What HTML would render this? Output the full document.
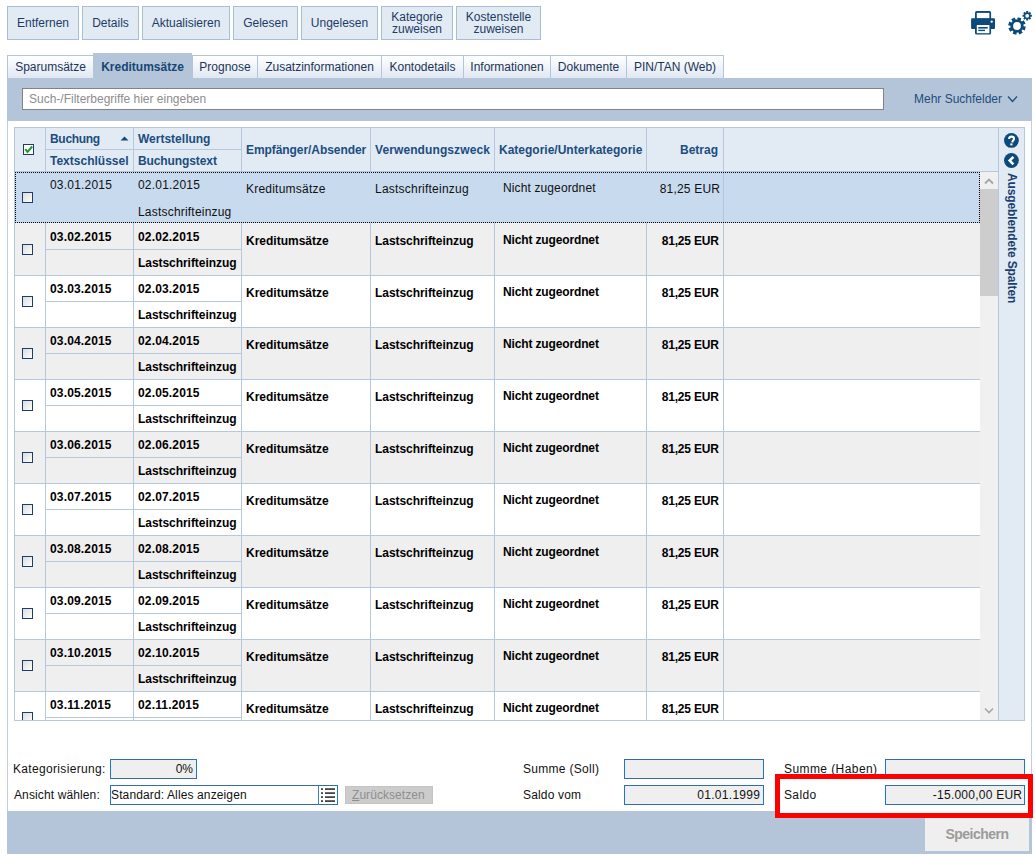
<!DOCTYPE html>
<html><head><meta charset="utf-8"><style>
html,body{margin:0;padding:0;background:#fff;}
body{width:1035px;height:857px;position:relative;overflow:hidden;font-family:"Liberation Sans", sans-serif;font-size:12px;}
.t{position:absolute;white-space:nowrap;line-height:14px;font-family:"Liberation Sans", sans-serif;font-size:12px;}
</style></head><body>
<div style="position:absolute;left:7px;top:6px;width:72px;height:34px;background:#e2eaf4;border:1px solid #a9bdd6;box-sizing:border-box;"></div><div class="t" style="left:7px;top:16px;width:72px;text-align:center;color:#1c3c64;">Entfernen</div><div style="position:absolute;left:82px;top:6px;width:57px;height:34px;background:#e2eaf4;border:1px solid #a9bdd6;box-sizing:border-box;"></div><div class="t" style="left:82px;top:16px;width:57px;text-align:center;color:#1c3c64;">Details</div><div style="position:absolute;left:142px;top:6px;width:88px;height:34px;background:#e2eaf4;border:1px solid #a9bdd6;box-sizing:border-box;"></div><div class="t" style="left:142px;top:16px;width:88px;text-align:center;color:#1c3c64;">Aktualisieren</div><div style="position:absolute;left:233px;top:6px;width:65px;height:34px;background:#e2eaf4;border:1px solid #a9bdd6;box-sizing:border-box;"></div><div class="t" style="left:233px;top:16px;width:65px;text-align:center;color:#1c3c64;">Gelesen</div><div style="position:absolute;left:301px;top:6px;width:77px;height:34px;background:#e2eaf4;border:1px solid #a9bdd6;box-sizing:border-box;"></div><div class="t" style="left:301px;top:16px;width:77px;text-align:center;color:#1c3c64;">Ungelesen</div><div style="position:absolute;left:381px;top:6px;width:72px;height:34px;background:#e2eaf4;border:1px solid #a9bdd6;box-sizing:border-box;"></div><div class="t" style="left:381px;top:10px;width:72px;text-align:center;color:#1c3c64;">Kategorie</div><div class="t" style="left:381px;top:22px;width:72px;text-align:center;color:#1c3c64;">zuweisen</div><div style="position:absolute;left:456px;top:6px;width:85px;height:34px;background:#e2eaf4;border:1px solid #a9bdd6;box-sizing:border-box;"></div><div class="t" style="left:456px;top:10px;width:85px;text-align:center;color:#1c3c64;">Kostenstelle</div><div class="t" style="left:456px;top:22px;width:85px;text-align:center;color:#1c3c64;">zuweisen</div><svg style="position:absolute;left:965px;top:5px" width="35" height="35" viewBox="0 0 35 35">
<rect x="10" y="6.1" width="16.1" height="9" rx="1.6" fill="#0b4a7a"/>
<rect x="11.8" y="7.9" width="12.6" height="5.6" fill="#fff"/>
<rect x="6.1" y="13.3" width="23.9" height="10.8" rx="1" fill="#0b4a7a"/>
<rect x="10" y="19.5" width="16.1" height="10.1" rx="1.6" fill="#0b4a7a"/>
<rect x="11.8" y="20" width="12.6" height="8.2" fill="#fff"/>
<rect x="13.3" y="22.0" width="9.4" height="1.6" fill="#0b4a7a"/>
<rect x="13.3" y="24.7" width="6.7" height="1.4" fill="#0b4a7a"/>
<circle cx="26.7" cy="16.7" r="1.15" fill="#fff"/>
</svg><svg style="position:absolute;left:1000px;top:5px" width="35" height="35" viewBox="0 0 35 35">
<path d="M17.22,14.40 L17.75,12.13 L21.39,13.26 L20.55,15.43 L21.82,16.49 L23.80,15.26 L25.58,18.63 L23.44,19.57 L23.60,21.22 L25.87,21.75 L24.74,25.39 L22.57,24.55 L21.51,25.82 L22.74,27.80 L19.37,29.58 L18.43,27.44 L16.78,27.60 L16.25,29.87 L12.61,28.74 L13.45,26.57 L12.18,25.51 L10.20,26.74 L8.42,23.37 L10.56,22.43 L10.40,20.78 L8.13,20.25 L9.26,16.61 L11.43,17.45 L12.49,16.18 L11.26,14.20 L14.63,12.42 L15.57,14.56 Z M20.90,21.00 A3.9,3.9 0 1,0 13.10,21.00 A3.9,3.9 0 1,0 20.90,21.00 Z" fill="#0b4a7a" fill-rule="evenodd"/>
<path d="M26.21,7.55 L26.17,6.11 L28.23,6.11 L28.19,7.55 L28.80,7.80 L29.79,6.76 L31.24,8.21 L30.20,9.20 L30.45,9.81 L31.89,9.77 L31.89,11.83 L30.45,11.79 L30.20,12.40 L31.24,13.39 L29.79,14.84 L28.80,13.80 L28.19,14.05 L28.23,15.49 L26.17,15.49 L26.21,14.05 L25.60,13.80 L24.61,14.84 L23.16,13.39 L24.20,12.40 L23.95,11.79 L22.51,11.83 L22.51,9.77 L23.95,9.81 L24.20,9.20 L23.16,8.21 L24.61,6.76 L25.60,7.80 Z M29.10,10.80 A1.9,1.9 0 1,0 25.30,10.80 A1.9,1.9 0 1,0 29.10,10.80 Z" fill="#0b4a7a" fill-rule="evenodd"/>
</svg><div style="position:absolute;left:7px;top:55px;width:87px;height:24px;background:linear-gradient(#ffffff,#dfe7f2);border:1px solid #b3c4da;border-bottom:none;box-sizing:border-box;"></div><div class="t" style="left:7px;top:60px;width:87px;text-align:center;color:#1c3556;">Sparumsätze</div><div style="position:absolute;left:93px;top:53px;width:99px;height:26px;background:#b4c5da;"></div><div class="t" style="left:93px;top:60px;width:99px;text-align:center;color:#164776;font-weight:bold;">Kreditumsätze</div><div style="position:absolute;left:192px;top:55px;width:66px;height:24px;background:linear-gradient(#ffffff,#dfe7f2);border:1px solid #b3c4da;border-bottom:none;box-sizing:border-box;"></div><div class="t" style="left:192px;top:60px;width:66px;text-align:center;color:#1c3556;">Prognose</div><div style="position:absolute;left:257px;top:55px;width:125px;height:24px;background:linear-gradient(#ffffff,#dfe7f2);border:1px solid #b3c4da;border-bottom:none;box-sizing:border-box;"></div><div class="t" style="left:257px;top:60px;width:125px;text-align:center;color:#1c3556;">Zusatzinformationen</div><div style="position:absolute;left:381px;top:55px;width:83px;height:24px;background:linear-gradient(#ffffff,#dfe7f2);border:1px solid #b3c4da;border-bottom:none;box-sizing:border-box;"></div><div class="t" style="left:381px;top:60px;width:83px;text-align:center;color:#1c3556;">Kontodetails</div><div style="position:absolute;left:463px;top:55px;width:88px;height:24px;background:linear-gradient(#ffffff,#dfe7f2);border:1px solid #b3c4da;border-bottom:none;box-sizing:border-box;"></div><div class="t" style="left:463px;top:60px;width:88px;text-align:center;color:#1c3556;">Informationen</div><div style="position:absolute;left:550px;top:55px;width:77px;height:24px;background:linear-gradient(#ffffff,#dfe7f2);border:1px solid #b3c4da;border-bottom:none;box-sizing:border-box;"></div><div class="t" style="left:550px;top:60px;width:77px;text-align:center;color:#1c3556;">Dokumente</div><div style="position:absolute;left:626px;top:55px;width:98px;height:24px;background:linear-gradient(#ffffff,#dfe7f2);border:1px solid #b3c4da;border-bottom:none;box-sizing:border-box;"></div><div class="t" style="left:626px;top:60px;width:98px;text-align:center;color:#1c3556;">PIN/TAN (Web)</div><div style="position:absolute;left:7px;top:78px;width:1025px;height:43px;background:#b4c5da;"></div><div style="position:absolute;left:22px;top:88px;width:862px;height:22px;background:#fff;border:1px solid #838383;box-sizing:border-box;"></div><div class="t" style="left:29px;top:92px;text-align:left;color:#8d8d8d;">Such-/Filterbegriffe hier eingeben</div><div class="t" style="left:914px;top:92px;text-align:left;color:#1e4d7b;">Mehr Suchfelder</div><svg style="position:absolute;left:1007px;top:95px" width="12" height="9" viewBox="0 0 12 9"><path d="M1,1.5 L5.5,6.5 L10,1.5" fill="none" stroke="#1e4d7b" stroke-width="1.2"/></svg><div style="position:absolute;left:7px;top:121px;width:1px;height:690px;background:#c0cfe2;"></div><div style="position:absolute;left:1031px;top:121px;width:1px;height:690px;background:#c0cfe2;"></div><div style="position:absolute;left:14px;top:127px;width:985px;height:45px;background:#e2eaf4;"></div><div style="position:absolute;left:998px;top:127px;width:27px;height:594px;background:#e2eaf4;"></div><div style="position:absolute;left:14px;top:127px;width:1011px;height:1px;background:#b7c7dd;"></div><div style="position:absolute;left:14px;top:127px;width:1px;height:594px;background:#b7c7dd;"></div><div style="position:absolute;left:998px;top:127px;width:1px;height:594px;background:#b7c7dd;"></div><div style="position:absolute;left:1024px;top:127px;width:1px;height:594px;background:#b7c7dd;"></div><div style="position:absolute;left:14px;top:720px;width:1011px;height:1px;background:#b7c7dd;"></div><div style="position:absolute;left:14px;top:171px;width:985px;height:1px;background:#b7c7dd;"></div><div style="position:absolute;left:45px;top:127px;width:1px;height:45px;background:#b7c7dd;"></div><div style="position:absolute;left:133px;top:127px;width:1px;height:45px;background:#b7c7dd;"></div><div style="position:absolute;left:241px;top:127px;width:1px;height:45px;background:#b7c7dd;"></div><div style="position:absolute;left:370px;top:127px;width:1px;height:45px;background:#b7c7dd;"></div><div style="position:absolute;left:494px;top:127px;width:1px;height:45px;background:#b7c7dd;"></div><div style="position:absolute;left:646px;top:127px;width:1px;height:45px;background:#b7c7dd;"></div><div style="position:absolute;left:723px;top:127px;width:1px;height:45px;background:#b7c7dd;"></div><div style="position:absolute;left:45px;top:149px;width:197px;height:1px;background:#b7c7dd;"></div><svg style="position:absolute;left:22px;top:143px" width="13" height="13" viewBox="0 0 13 13"><rect x="1.5" y="1.5" width="10" height="10" fill="#fff" stroke="#1d3f66" stroke-width="1"/><path d="M3.2,6.2 L5.5,8.9 L10.2,3.5" fill="none" stroke="#229a22" stroke-width="2"/></svg><div class="t" style="left:50px;top:132px;text-align:left;letter-spacing:-0.3px;color:#1b4d80;font-weight:bold;">Buchung</div><svg style="position:absolute;left:120px;top:136px" width="9" height="5" viewBox="0 0 9 5"><path d="M0.5,4.5 L4.5,0.5 L8.5,4.5 Z" fill="#174a78"/></svg><div class="t" style="left:50px;top:154px;text-align:left;color:#1b4d80;font-weight:bold;">Textschlüssel</div><div class="t" style="left:138px;top:132px;text-align:left;color:#1b4d80;font-weight:bold;">Wertstellung</div><div class="t" style="left:138px;top:154px;text-align:left;letter-spacing:-0.1px;color:#1b4d80;font-weight:bold;">Buchungstext</div><div class="t" style="left:246px;top:143px;text-align:left;letter-spacing:-0.07px;color:#1b4d80;font-weight:bold;">Empfänger/Absender</div><div class="t" style="left:375px;top:143px;text-align:left;letter-spacing:0.1px;color:#1b4d80;font-weight:bold;">Verwendungszweck</div><div class="t" style="left:499px;top:143px;text-align:left;color:#1b4d80;font-weight:bold;">Kategorie/Unterkategorie</div><div class="t" style="left:646px;top:143px;width:72px;text-align:right;color:#1b4d80;font-weight:bold;">Betrag</div><div style="position:absolute;left:15px;top:172px;width:965px;height:548px;overflow:hidden"><div style="position:absolute;left:0px;top:51px;width:965px;height:52px;background:#efefef;"></div><div style="position:absolute;left:0px;top:103px;width:965px;height:52px;background:#fff;"></div><div style="position:absolute;left:0px;top:155px;width:965px;height:52px;background:#efefef;"></div><div style="position:absolute;left:0px;top:207px;width:965px;height:52px;background:#fff;"></div><div style="position:absolute;left:0px;top:259px;width:965px;height:52px;background:#efefef;"></div><div style="position:absolute;left:0px;top:311px;width:965px;height:52px;background:#fff;"></div><div style="position:absolute;left:0px;top:363px;width:965px;height:52px;background:#efefef;"></div><div style="position:absolute;left:0px;top:415px;width:965px;height:52px;background:#fff;"></div><div style="position:absolute;left:0px;top:467px;width:965px;height:52px;background:#efefef;"></div><div style="position:absolute;left:0px;top:519px;width:965px;height:52px;background:#fff;"></div><div style="position:absolute;left:-1px;top:0px;width:966px;height:51px;background:#c8daee;"></div><div style="position:absolute;left:0px;top:0px;width:965px;height:1px;border-top:1px dotted #000;box-sizing:border-box;"></div><div style="position:absolute;left:0px;top:50px;width:965px;height:1px;border-top:1px dotted #000;box-sizing:border-box;"></div><div style="position:absolute;left:0px;top:0px;width:1px;height:51px;border-left:1px dotted #000;box-sizing:border-box;"></div><div style="position:absolute;left:964px;top:0px;width:1px;height:51px;border-left:1px dotted #000;box-sizing:border-box;"></div><div style="position:absolute;left:7px;top:20px;width:11px;height:11px;box-sizing:border-box;border:1px solid #1d3f66;background:linear-gradient(135deg,#dcdcdc,#fdfdfd)"></div><div style="position:absolute;left:708px;top:1px;width:1px;height:49px;background:#b3c5dc;"></div><div class="t" style="left:35px;top:6px;text-align:left;letter-spacing:0.2px;color:#111;">03.01.2015</div><div class="t" style="left:123px;top:6px;text-align:left;letter-spacing:0.2px;color:#111;">02.01.2015</div><div class="t" style="left:123px;top:33px;text-align:left;letter-spacing:0.2px;color:#111;">Lastschrifteinzug</div><div class="t" style="left:231px;top:10px;text-align:left;letter-spacing:0.22px;color:#111;">Kreditumsätze</div><div class="t" style="left:360px;top:10px;text-align:left;letter-spacing:0.22px;color:#111;">Lastschrifteinzug</div><div class="t" style="left:488px;top:9px;text-align:left;letter-spacing:0.12px;color:#111;">Nicht zugeordnet</div><div class="t" style="left:631px;top:10px;width:74.2px;text-align:right;letter-spacing:0.2px;color:#111;">81,25 EUR</div><div style="position:absolute;left:0px;top:103px;width:965px;height:1px;background:#b7c7dd;"></div><div style="position:absolute;left:30px;top:51px;width:1px;height:53px;background:#b7c7dd;"></div><div style="position:absolute;left:118px;top:51px;width:1px;height:53px;background:#b7c7dd;"></div><div style="position:absolute;left:226px;top:51px;width:1px;height:53px;background:#b7c7dd;"></div><div style="position:absolute;left:355px;top:51px;width:1px;height:53px;background:#b7c7dd;"></div><div style="position:absolute;left:479px;top:51px;width:1px;height:53px;background:#b7c7dd;"></div><div style="position:absolute;left:631px;top:51px;width:1px;height:53px;background:#b7c7dd;"></div><div style="position:absolute;left:708px;top:51px;width:1px;height:53px;background:#b7c7dd;"></div><div style="position:absolute;left:31px;top:77px;width:195px;height:1px;background:#b7c7dd;"></div><div style="position:absolute;left:7px;top:72px;width:11px;height:11px;box-sizing:border-box;border:1px solid #1d3f66;background:linear-gradient(135deg,#dcdcdc,#fdfdfd)"></div><div class="t" style="left:35px;top:58px;text-align:left;letter-spacing:0.16px;color:#000;font-weight:bold;">03.02.2015</div><div class="t" style="left:123px;top:58px;text-align:left;letter-spacing:0.16px;color:#000;font-weight:bold;">02.02.2015</div><div class="t" style="left:123px;top:84px;text-align:left;letter-spacing:-0.05px;color:#000;font-weight:bold;">Lastschrifteinzug</div><div class="t" style="left:231px;top:62px;text-align:left;color:#000;font-weight:bold;">Kreditumsätze</div><div class="t" style="left:360px;top:62px;text-align:left;letter-spacing:-0.05px;color:#000;font-weight:bold;">Lastschrifteinzug</div><div class="t" style="left:488px;top:61px;text-align:left;letter-spacing:-0.14px;color:#000;font-weight:bold;">Nicht zugeordnet</div><div class="t" style="left:631px;top:62px;width:72.82px;text-align:right;letter-spacing:-0.18px;color:#000;font-weight:bold;">81,25 EUR</div><div style="position:absolute;left:0px;top:155px;width:965px;height:1px;background:#b7c7dd;"></div><div style="position:absolute;left:30px;top:103px;width:1px;height:53px;background:#b7c7dd;"></div><div style="position:absolute;left:118px;top:103px;width:1px;height:53px;background:#b7c7dd;"></div><div style="position:absolute;left:226px;top:103px;width:1px;height:53px;background:#b7c7dd;"></div><div style="position:absolute;left:355px;top:103px;width:1px;height:53px;background:#b7c7dd;"></div><div style="position:absolute;left:479px;top:103px;width:1px;height:53px;background:#b7c7dd;"></div><div style="position:absolute;left:631px;top:103px;width:1px;height:53px;background:#b7c7dd;"></div><div style="position:absolute;left:708px;top:103px;width:1px;height:53px;background:#b7c7dd;"></div><div style="position:absolute;left:31px;top:129px;width:195px;height:1px;background:#b7c7dd;"></div><div style="position:absolute;left:7px;top:124px;width:11px;height:11px;box-sizing:border-box;border:1px solid #1d3f66;background:linear-gradient(135deg,#dcdcdc,#fdfdfd)"></div><div class="t" style="left:35px;top:110px;text-align:left;letter-spacing:0.16px;color:#000;font-weight:bold;">03.03.2015</div><div class="t" style="left:123px;top:110px;text-align:left;letter-spacing:0.16px;color:#000;font-weight:bold;">02.03.2015</div><div class="t" style="left:123px;top:136px;text-align:left;letter-spacing:-0.05px;color:#000;font-weight:bold;">Lastschrifteinzug</div><div class="t" style="left:231px;top:114px;text-align:left;color:#000;font-weight:bold;">Kreditumsätze</div><div class="t" style="left:360px;top:114px;text-align:left;letter-spacing:-0.05px;color:#000;font-weight:bold;">Lastschrifteinzug</div><div class="t" style="left:488px;top:113px;text-align:left;letter-spacing:-0.14px;color:#000;font-weight:bold;">Nicht zugeordnet</div><div class="t" style="left:631px;top:114px;width:72.82px;text-align:right;letter-spacing:-0.18px;color:#000;font-weight:bold;">81,25 EUR</div><div style="position:absolute;left:0px;top:207px;width:965px;height:1px;background:#b7c7dd;"></div><div style="position:absolute;left:30px;top:155px;width:1px;height:53px;background:#b7c7dd;"></div><div style="position:absolute;left:118px;top:155px;width:1px;height:53px;background:#b7c7dd;"></div><div style="position:absolute;left:226px;top:155px;width:1px;height:53px;background:#b7c7dd;"></div><div style="position:absolute;left:355px;top:155px;width:1px;height:53px;background:#b7c7dd;"></div><div style="position:absolute;left:479px;top:155px;width:1px;height:53px;background:#b7c7dd;"></div><div style="position:absolute;left:631px;top:155px;width:1px;height:53px;background:#b7c7dd;"></div><div style="position:absolute;left:708px;top:155px;width:1px;height:53px;background:#b7c7dd;"></div><div style="position:absolute;left:31px;top:181px;width:195px;height:1px;background:#b7c7dd;"></div><div style="position:absolute;left:7px;top:176px;width:11px;height:11px;box-sizing:border-box;border:1px solid #1d3f66;background:linear-gradient(135deg,#dcdcdc,#fdfdfd)"></div><div class="t" style="left:35px;top:162px;text-align:left;letter-spacing:0.16px;color:#000;font-weight:bold;">03.04.2015</div><div class="t" style="left:123px;top:162px;text-align:left;letter-spacing:0.16px;color:#000;font-weight:bold;">02.04.2015</div><div class="t" style="left:123px;top:188px;text-align:left;letter-spacing:-0.05px;color:#000;font-weight:bold;">Lastschrifteinzug</div><div class="t" style="left:231px;top:166px;text-align:left;color:#000;font-weight:bold;">Kreditumsätze</div><div class="t" style="left:360px;top:166px;text-align:left;letter-spacing:-0.05px;color:#000;font-weight:bold;">Lastschrifteinzug</div><div class="t" style="left:488px;top:165px;text-align:left;letter-spacing:-0.14px;color:#000;font-weight:bold;">Nicht zugeordnet</div><div class="t" style="left:631px;top:166px;width:72.82px;text-align:right;letter-spacing:-0.18px;color:#000;font-weight:bold;">81,25 EUR</div><div style="position:absolute;left:0px;top:259px;width:965px;height:1px;background:#b7c7dd;"></div><div style="position:absolute;left:30px;top:207px;width:1px;height:53px;background:#b7c7dd;"></div><div style="position:absolute;left:118px;top:207px;width:1px;height:53px;background:#b7c7dd;"></div><div style="position:absolute;left:226px;top:207px;width:1px;height:53px;background:#b7c7dd;"></div><div style="position:absolute;left:355px;top:207px;width:1px;height:53px;background:#b7c7dd;"></div><div style="position:absolute;left:479px;top:207px;width:1px;height:53px;background:#b7c7dd;"></div><div style="position:absolute;left:631px;top:207px;width:1px;height:53px;background:#b7c7dd;"></div><div style="position:absolute;left:708px;top:207px;width:1px;height:53px;background:#b7c7dd;"></div><div style="position:absolute;left:31px;top:233px;width:195px;height:1px;background:#b7c7dd;"></div><div style="position:absolute;left:7px;top:228px;width:11px;height:11px;box-sizing:border-box;border:1px solid #1d3f66;background:linear-gradient(135deg,#dcdcdc,#fdfdfd)"></div><div class="t" style="left:35px;top:214px;text-align:left;letter-spacing:0.16px;color:#000;font-weight:bold;">03.05.2015</div><div class="t" style="left:123px;top:214px;text-align:left;letter-spacing:0.16px;color:#000;font-weight:bold;">02.05.2015</div><div class="t" style="left:123px;top:240px;text-align:left;letter-spacing:-0.05px;color:#000;font-weight:bold;">Lastschrifteinzug</div><div class="t" style="left:231px;top:218px;text-align:left;color:#000;font-weight:bold;">Kreditumsätze</div><div class="t" style="left:360px;top:218px;text-align:left;letter-spacing:-0.05px;color:#000;font-weight:bold;">Lastschrifteinzug</div><div class="t" style="left:488px;top:217px;text-align:left;letter-spacing:-0.14px;color:#000;font-weight:bold;">Nicht zugeordnet</div><div class="t" style="left:631px;top:218px;width:72.82px;text-align:right;letter-spacing:-0.18px;color:#000;font-weight:bold;">81,25 EUR</div><div style="position:absolute;left:0px;top:311px;width:965px;height:1px;background:#b7c7dd;"></div><div style="position:absolute;left:30px;top:259px;width:1px;height:53px;background:#b7c7dd;"></div><div style="position:absolute;left:118px;top:259px;width:1px;height:53px;background:#b7c7dd;"></div><div style="position:absolute;left:226px;top:259px;width:1px;height:53px;background:#b7c7dd;"></div><div style="position:absolute;left:355px;top:259px;width:1px;height:53px;background:#b7c7dd;"></div><div style="position:absolute;left:479px;top:259px;width:1px;height:53px;background:#b7c7dd;"></div><div style="position:absolute;left:631px;top:259px;width:1px;height:53px;background:#b7c7dd;"></div><div style="position:absolute;left:708px;top:259px;width:1px;height:53px;background:#b7c7dd;"></div><div style="position:absolute;left:31px;top:285px;width:195px;height:1px;background:#b7c7dd;"></div><div style="position:absolute;left:7px;top:280px;width:11px;height:11px;box-sizing:border-box;border:1px solid #1d3f66;background:linear-gradient(135deg,#dcdcdc,#fdfdfd)"></div><div class="t" style="left:35px;top:266px;text-align:left;letter-spacing:0.16px;color:#000;font-weight:bold;">03.06.2015</div><div class="t" style="left:123px;top:266px;text-align:left;letter-spacing:0.16px;color:#000;font-weight:bold;">02.06.2015</div><div class="t" style="left:123px;top:292px;text-align:left;letter-spacing:-0.05px;color:#000;font-weight:bold;">Lastschrifteinzug</div><div class="t" style="left:231px;top:270px;text-align:left;color:#000;font-weight:bold;">Kreditumsätze</div><div class="t" style="left:360px;top:270px;text-align:left;letter-spacing:-0.05px;color:#000;font-weight:bold;">Lastschrifteinzug</div><div class="t" style="left:488px;top:269px;text-align:left;letter-spacing:-0.14px;color:#000;font-weight:bold;">Nicht zugeordnet</div><div class="t" style="left:631px;top:270px;width:72.82px;text-align:right;letter-spacing:-0.18px;color:#000;font-weight:bold;">81,25 EUR</div><div style="position:absolute;left:0px;top:363px;width:965px;height:1px;background:#b7c7dd;"></div><div style="position:absolute;left:30px;top:311px;width:1px;height:53px;background:#b7c7dd;"></div><div style="position:absolute;left:118px;top:311px;width:1px;height:53px;background:#b7c7dd;"></div><div style="position:absolute;left:226px;top:311px;width:1px;height:53px;background:#b7c7dd;"></div><div style="position:absolute;left:355px;top:311px;width:1px;height:53px;background:#b7c7dd;"></div><div style="position:absolute;left:479px;top:311px;width:1px;height:53px;background:#b7c7dd;"></div><div style="position:absolute;left:631px;top:311px;width:1px;height:53px;background:#b7c7dd;"></div><div style="position:absolute;left:708px;top:311px;width:1px;height:53px;background:#b7c7dd;"></div><div style="position:absolute;left:31px;top:337px;width:195px;height:1px;background:#b7c7dd;"></div><div style="position:absolute;left:7px;top:332px;width:11px;height:11px;box-sizing:border-box;border:1px solid #1d3f66;background:linear-gradient(135deg,#dcdcdc,#fdfdfd)"></div><div class="t" style="left:35px;top:318px;text-align:left;letter-spacing:0.16px;color:#000;font-weight:bold;">03.07.2015</div><div class="t" style="left:123px;top:318px;text-align:left;letter-spacing:0.16px;color:#000;font-weight:bold;">02.07.2015</div><div class="t" style="left:123px;top:344px;text-align:left;letter-spacing:-0.05px;color:#000;font-weight:bold;">Lastschrifteinzug</div><div class="t" style="left:231px;top:322px;text-align:left;color:#000;font-weight:bold;">Kreditumsätze</div><div class="t" style="left:360px;top:322px;text-align:left;letter-spacing:-0.05px;color:#000;font-weight:bold;">Lastschrifteinzug</div><div class="t" style="left:488px;top:321px;text-align:left;letter-spacing:-0.14px;color:#000;font-weight:bold;">Nicht zugeordnet</div><div class="t" style="left:631px;top:322px;width:72.82px;text-align:right;letter-spacing:-0.18px;color:#000;font-weight:bold;">81,25 EUR</div><div style="position:absolute;left:0px;top:415px;width:965px;height:1px;background:#b7c7dd;"></div><div style="position:absolute;left:30px;top:363px;width:1px;height:53px;background:#b7c7dd;"></div><div style="position:absolute;left:118px;top:363px;width:1px;height:53px;background:#b7c7dd;"></div><div style="position:absolute;left:226px;top:363px;width:1px;height:53px;background:#b7c7dd;"></div><div style="position:absolute;left:355px;top:363px;width:1px;height:53px;background:#b7c7dd;"></div><div style="position:absolute;left:479px;top:363px;width:1px;height:53px;background:#b7c7dd;"></div><div style="position:absolute;left:631px;top:363px;width:1px;height:53px;background:#b7c7dd;"></div><div style="position:absolute;left:708px;top:363px;width:1px;height:53px;background:#b7c7dd;"></div><div style="position:absolute;left:31px;top:389px;width:195px;height:1px;background:#b7c7dd;"></div><div style="position:absolute;left:7px;top:384px;width:11px;height:11px;box-sizing:border-box;border:1px solid #1d3f66;background:linear-gradient(135deg,#dcdcdc,#fdfdfd)"></div><div class="t" style="left:35px;top:370px;text-align:left;letter-spacing:0.16px;color:#000;font-weight:bold;">03.08.2015</div><div class="t" style="left:123px;top:370px;text-align:left;letter-spacing:0.16px;color:#000;font-weight:bold;">02.08.2015</div><div class="t" style="left:123px;top:396px;text-align:left;letter-spacing:-0.05px;color:#000;font-weight:bold;">Lastschrifteinzug</div><div class="t" style="left:231px;top:374px;text-align:left;color:#000;font-weight:bold;">Kreditumsätze</div><div class="t" style="left:360px;top:374px;text-align:left;letter-spacing:-0.05px;color:#000;font-weight:bold;">Lastschrifteinzug</div><div class="t" style="left:488px;top:373px;text-align:left;letter-spacing:-0.14px;color:#000;font-weight:bold;">Nicht zugeordnet</div><div class="t" style="left:631px;top:374px;width:72.82px;text-align:right;letter-spacing:-0.18px;color:#000;font-weight:bold;">81,25 EUR</div><div style="position:absolute;left:0px;top:467px;width:965px;height:1px;background:#b7c7dd;"></div><div style="position:absolute;left:30px;top:415px;width:1px;height:53px;background:#b7c7dd;"></div><div style="position:absolute;left:118px;top:415px;width:1px;height:53px;background:#b7c7dd;"></div><div style="position:absolute;left:226px;top:415px;width:1px;height:53px;background:#b7c7dd;"></div><div style="position:absolute;left:355px;top:415px;width:1px;height:53px;background:#b7c7dd;"></div><div style="position:absolute;left:479px;top:415px;width:1px;height:53px;background:#b7c7dd;"></div><div style="position:absolute;left:631px;top:415px;width:1px;height:53px;background:#b7c7dd;"></div><div style="position:absolute;left:708px;top:415px;width:1px;height:53px;background:#b7c7dd;"></div><div style="position:absolute;left:31px;top:441px;width:195px;height:1px;background:#b7c7dd;"></div><div style="position:absolute;left:7px;top:436px;width:11px;height:11px;box-sizing:border-box;border:1px solid #1d3f66;background:linear-gradient(135deg,#dcdcdc,#fdfdfd)"></div><div class="t" style="left:35px;top:422px;text-align:left;letter-spacing:0.16px;color:#000;font-weight:bold;">03.09.2015</div><div class="t" style="left:123px;top:422px;text-align:left;letter-spacing:0.16px;color:#000;font-weight:bold;">02.09.2015</div><div class="t" style="left:123px;top:448px;text-align:left;letter-spacing:-0.05px;color:#000;font-weight:bold;">Lastschrifteinzug</div><div class="t" style="left:231px;top:426px;text-align:left;color:#000;font-weight:bold;">Kreditumsätze</div><div class="t" style="left:360px;top:426px;text-align:left;letter-spacing:-0.05px;color:#000;font-weight:bold;">Lastschrifteinzug</div><div class="t" style="left:488px;top:425px;text-align:left;letter-spacing:-0.14px;color:#000;font-weight:bold;">Nicht zugeordnet</div><div class="t" style="left:631px;top:426px;width:72.82px;text-align:right;letter-spacing:-0.18px;color:#000;font-weight:bold;">81,25 EUR</div><div style="position:absolute;left:0px;top:519px;width:965px;height:1px;background:#b7c7dd;"></div><div style="position:absolute;left:30px;top:467px;width:1px;height:53px;background:#b7c7dd;"></div><div style="position:absolute;left:118px;top:467px;width:1px;height:53px;background:#b7c7dd;"></div><div style="position:absolute;left:226px;top:467px;width:1px;height:53px;background:#b7c7dd;"></div><div style="position:absolute;left:355px;top:467px;width:1px;height:53px;background:#b7c7dd;"></div><div style="position:absolute;left:479px;top:467px;width:1px;height:53px;background:#b7c7dd;"></div><div style="position:absolute;left:631px;top:467px;width:1px;height:53px;background:#b7c7dd;"></div><div style="position:absolute;left:708px;top:467px;width:1px;height:53px;background:#b7c7dd;"></div><div style="position:absolute;left:31px;top:493px;width:195px;height:1px;background:#b7c7dd;"></div><div style="position:absolute;left:7px;top:488px;width:11px;height:11px;box-sizing:border-box;border:1px solid #1d3f66;background:linear-gradient(135deg,#dcdcdc,#fdfdfd)"></div><div class="t" style="left:35px;top:474px;text-align:left;letter-spacing:0.16px;color:#000;font-weight:bold;">03.10.2015</div><div class="t" style="left:123px;top:474px;text-align:left;letter-spacing:0.16px;color:#000;font-weight:bold;">02.10.2015</div><div class="t" style="left:123px;top:500px;text-align:left;letter-spacing:-0.05px;color:#000;font-weight:bold;">Lastschrifteinzug</div><div class="t" style="left:231px;top:478px;text-align:left;color:#000;font-weight:bold;">Kreditumsätze</div><div class="t" style="left:360px;top:478px;text-align:left;letter-spacing:-0.05px;color:#000;font-weight:bold;">Lastschrifteinzug</div><div class="t" style="left:488px;top:477px;text-align:left;letter-spacing:-0.14px;color:#000;font-weight:bold;">Nicht zugeordnet</div><div class="t" style="left:631px;top:478px;width:72.82px;text-align:right;letter-spacing:-0.18px;color:#000;font-weight:bold;">81,25 EUR</div><div style="position:absolute;left:0px;top:571px;width:965px;height:1px;background:#b7c7dd;"></div><div style="position:absolute;left:30px;top:519px;width:1px;height:53px;background:#b7c7dd;"></div><div style="position:absolute;left:118px;top:519px;width:1px;height:53px;background:#b7c7dd;"></div><div style="position:absolute;left:226px;top:519px;width:1px;height:53px;background:#b7c7dd;"></div><div style="position:absolute;left:355px;top:519px;width:1px;height:53px;background:#b7c7dd;"></div><div style="position:absolute;left:479px;top:519px;width:1px;height:53px;background:#b7c7dd;"></div><div style="position:absolute;left:631px;top:519px;width:1px;height:53px;background:#b7c7dd;"></div><div style="position:absolute;left:708px;top:519px;width:1px;height:53px;background:#b7c7dd;"></div><div style="position:absolute;left:31px;top:545px;width:195px;height:1px;background:#b7c7dd;"></div><div style="position:absolute;left:7px;top:540px;width:11px;height:11px;box-sizing:border-box;border:1px solid #1d3f66;background:linear-gradient(135deg,#dcdcdc,#fdfdfd)"></div><div class="t" style="left:35px;top:526px;text-align:left;letter-spacing:0.16px;color:#000;font-weight:bold;">03.11.2015</div><div class="t" style="left:123px;top:526px;text-align:left;letter-spacing:0.16px;color:#000;font-weight:bold;">02.11.2015</div><div class="t" style="left:123px;top:552px;text-align:left;letter-spacing:-0.05px;color:#000;font-weight:bold;">Lastschrifteinzug</div><div class="t" style="left:231px;top:530px;text-align:left;color:#000;font-weight:bold;">Kreditumsätze</div><div class="t" style="left:360px;top:530px;text-align:left;letter-spacing:-0.05px;color:#000;font-weight:bold;">Lastschrifteinzug</div><div class="t" style="left:488px;top:529px;text-align:left;letter-spacing:-0.14px;color:#000;font-weight:bold;">Nicht zugeordnet</div><div class="t" style="left:631px;top:530px;width:72.82px;text-align:right;letter-spacing:-0.18px;color:#000;font-weight:bold;">81,25 EUR</div></div><div style="position:absolute;left:14px;top:720px;width:985px;height:1px;background:#b7c7dd;"></div><div style="position:absolute;left:980px;top:172px;width:18px;height:548px;background:#f0f0f0;"></div><div style="position:absolute;left:980px;top:189px;width:18px;height:107px;background:#cdcdcd;"></div><svg style="position:absolute;left:983px;top:176px" width="12" height="10" viewBox="0 0 12 10"><path d="M2,7.5 L6,3.5 L10,7.5" fill="none" stroke="#a6a6a6" stroke-width="1.8"/></svg><svg style="position:absolute;left:983px;top:706px" width="12" height="10" viewBox="0 0 12 10"><path d="M2,2.5 L6,6.5 L10,2.5" fill="none" stroke="#a6a6a6" stroke-width="1.6"/></svg><svg style="position:absolute;left:1003px;top:132px" width="17" height="36" viewBox="0 0 17 36">
<circle cx="8.4" cy="8.4" r="7.4" fill="#0b4a7a"/>
<path d="M6.1,7.1 C6.1,5.4 7.1,4.6 8.5,4.6 C10,4.6 11,5.5 11,6.8 C11,8.2 9.5,8.5 9.4,9.6 L9.4,10.5" fill="none" stroke="#fff" stroke-width="2.1"/><rect x="7.3" y="11.4" width="2.2" height="2" fill="#fff"/>
<circle cx="8.4" cy="28.5" r="7.4" fill="#0b4a7a"/>
<path d="M10.4,24.9 L6.7,28.6 L10.4,32.3" fill="none" stroke="#fff" stroke-width="2.6"/>
</svg><div class="t" style="left:1005px;top:173px;width:14px;writing-mode:vertical-rl;color:#1a4070;font-weight:bold;letter-spacing:-0.12px;line-height:14px">Ausgeblendete Spalten</div><div class="t" style="left:13px;top:762px;text-align:left;letter-spacing:0.33px;color:#111;">Kategorisierung:</div><div style="position:absolute;left:110px;top:759px;width:87px;height:20px;background:#efefef;border:1px solid #356ca6;border-left-color:#1b74d6;border-right-color:#1b74d6;box-sizing:border-box;"></div><div class="t" style="left:110px;top:762px;width:83px;text-align:right;color:#111;">0%</div><div class="t" style="left:14px;top:788px;text-align:left;letter-spacing:0.12px;color:#111;">Ansicht wählen:</div><div style="position:absolute;left:110px;top:785px;width:228px;height:20px;background:#fff;border:1px solid #356ca6;border-left-color:#1b74d6;border-right-color:#1b74d6;box-sizing:border-box;"></div><div style="position:absolute;left:318px;top:785px;width:1px;height:20px;background:#3e7fc1;"></div><div class="t" style="left:111px;top:788px;text-align:left;letter-spacing:0.125px;color:#111;">Standard: Alles anzeigen</div><svg style="position:absolute;left:320px;top:787px" width="16" height="16" viewBox="0 0 16 16"><g fill="#464646"><rect x="1" y="1.2" width="2" height="1.8"/><rect x="1" y="5.2" width="2" height="1.8"/><rect x="1" y="9.2" width="2" height="1.8"/><rect x="1" y="13.2" width="2" height="1.8"/><rect x="5" y="1.2" width="10" height="1.8"/><rect x="5" y="5.2" width="10" height="1.8"/><rect x="5" y="9.2" width="10" height="1.8"/><rect x="5" y="13.2" width="10" height="1.8"/></g></svg><div style="position:absolute;left:345px;top:786px;width:88px;height:18px;background:#cccccc;border:1px solid #c4c4c4;box-sizing:border-box;"></div><div class="t" style="left:352px;top:788px;text-align:left;letter-spacing:0.06px;color:#8f8f8f;"><u>Z</u>urücksetzen</div><div class="t" style="left:523px;top:762px;text-align:left;letter-spacing:0.3px;color:#111;">Summe (Soll)</div><div style="position:absolute;left:624px;top:759px;width:140px;height:20px;background:#efefef;border:1px solid #356ca6;border-left-color:#1b74d6;border-right-color:#1b74d6;box-sizing:border-box;"></div><div class="t" style="left:523px;top:788px;text-align:left;letter-spacing:0.17px;color:#111;">Saldo vom</div><div style="position:absolute;left:624px;top:785px;width:140px;height:20px;background:#efefef;border:1px solid #356ca6;border-left-color:#1b74d6;border-right-color:#1b74d6;box-sizing:border-box;"></div><div class="t" style="left:624px;top:788px;width:136.3px;text-align:right;letter-spacing:0.3px;color:#111;">01.01.1999</div><div class="t" style="left:784px;top:762px;text-align:left;letter-spacing:0.42px;color:#111;">Summe (Haben)</div><div style="position:absolute;left:885px;top:759px;width:140px;height:20px;background:#efefef;border:1px solid #356ca6;border-left-color:#1b74d6;border-right-color:#1b74d6;box-sizing:border-box;"></div><div style="position:absolute;left:7px;top:811px;width:1025px;height:43px;background:#b4c5da;"></div><div style="position:absolute;left:925px;top:818px;width:104px;height:33px;background:#efefef;"></div><div class="t" style="left:925px;top:827px;width:104px;text-align:center;letter-spacing:-0.5px;color:#9b9b9b;font-weight:bold;font-size:14px;">Speichern</div><div style="position:absolute;left:775px;top:774px;width:258px;height:44px;background:#fff;border:5px solid #ff0000;box-sizing:border-box;"></div><div class="t" style="left:784px;top:788px;text-align:left;letter-spacing:0.36px;color:#111;">Saldo</div><div style="position:absolute;left:885px;top:785px;width:140px;height:20px;background:#efefef;border:1px solid #356ca6;border-left-color:#1b74d6;border-right-color:#1b74d6;box-sizing:border-box;"></div><div class="t" style="left:885px;top:788px;width:137.24px;text-align:right;letter-spacing:0.24px;color:#111;">-15.000,00 EUR</div>
</body></html>
